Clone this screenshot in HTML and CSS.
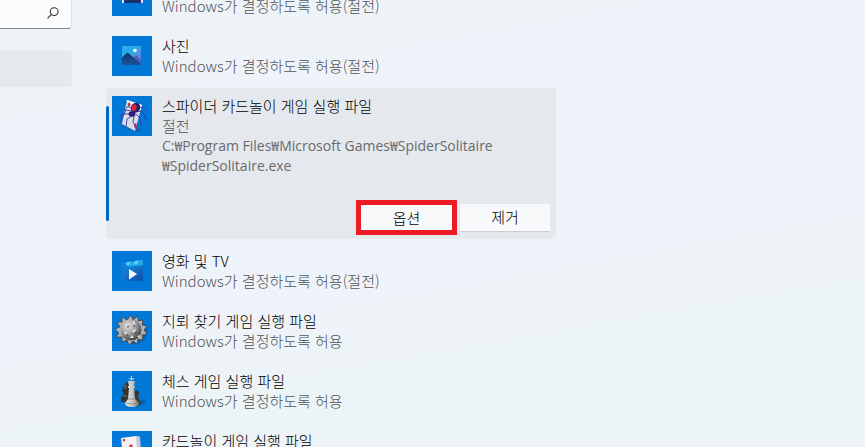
FILE: index.html
```html
<!DOCTYPE html>
<html lang="ko">

<head>
    <meta charset="UTF-8">
    <meta name="viewport" content="width=device-width, initial-scale=1.0">
    <title>그래픽</title>
    <link rel="stylesheet" href="styles.css">
</head>

<body>

    <aside class="sidebar">
        <div class="search">
            <input type="search" class="search-input" aria-label="설정 검색">
            <svg class="search-icon" viewBox="0 0 12 12" width="12" height="12" fill="none" stroke="#333" stroke-width="1.1">
                <circle cx="7.2" cy="4.6" r="3.9" />
                <path d="M4.4 7.4 .6 11.3" />
            </svg>
        </div>
        <a href="#" class="nav-item" aria-label="시스템"></a>
    </aside>

    <main class="content">
        <ul class="app-list">
            <li class="app">
                <svg class="app-icon" viewBox="0 0 40 40">
                    <rect width="40" height="40" fill="#0078d7" />
                    <rect x="10" y="10" width="21" height="17" rx="1" fill="#2b2f86" />
                    <path d="M10 24h2v3h-2zM29 24h2v3h-2z" fill="#e4e6f8" />
                    <path d="M12 27v-2l7-3 9 3v2z" fill="#17306d" />
                </svg>
                <div class="app-text">
                    <p class="app-name">비디오 편집기</p>
                    <p class="app-info">Windows가 결정하도록 허용(절전)</p>
                </div>
            </li>

            <li class="app">
                <svg class="app-icon" viewBox="0 0 40 40">
                    <defs>
                        <linearGradient id="sky" x1="0" y1="0" x2="1" y2="1">
                            <stop offset=".35" stop-color="#26aeea" />
                            <stop offset="1" stop-color="#7a70d4" />
                        </linearGradient>
                        <linearGradient id="hill" x1="0" y1="0" x2="0" y2="1">
                            <stop offset="0" stop-color="#153466" />
                            <stop offset="1" stop-color="#1b549c" />
                        </linearGradient>
                    </defs>
                    <rect width="40" height="40" fill="#0078d7" />
                    <rect x="10" y="10" width="19" height="19" rx="1" fill="url(#sky)" />
                    <path d="M21 22l2.500-2.200q.8-.5 1.500.2l4 4V28z" fill="#4661b8" />
                    <path d="M10 21.500l4.500-4.300q1-.8 2 0L29 28q0 1-1 1H11q-1 0-1-1z" fill="url(#hill)" />
                    <circle cx="23" cy="14.500" r="1.800" fill="#fff" />
                </svg>
                <div class="app-text">
                    <p class="app-name">사진</p>
                    <p class="app-info">Windows가 결정하도록 허용(절전)</p>
                </div>
            </li>

            <li class="app selected">
                <svg class="app-icon" viewBox="0 0 40 40">
                    <rect width="40" height="40" fill="#0078d7" />
                    <path d="M8 31l6-2 12 5 4-2-2 4z" fill="#1558a4" opacity=".7" />
                    <path d="M15 4l15 5-7 26-13-7z" fill="#dcdce6" />
                    <path d="M15 4l15 5-1 4-14-7z" fill="#fff" />
                    <path d="M15.500 8l2-2 1 3-1.500 2zM22 29l2-2 1 3-2 3z" fill="#d42b32" />
                    <g fill="none" stroke="#3f35a0" stroke-width=".9">
                        <path d="M20 15l-6-1-4 8-2 5" />
                        <path d="M19 18l-8 0-4 5" />
                        <path d="M20 20l-5 3-1 8" />
                        <path d="M22 20l-1 6 3 5 1 4" />
                        <path d="M24 18l4 4 1 7" />
                        <path d="M25 15l6 1 4 9" />
                        <path d="M25 12l6-1 4 4" />
                        <path d="M20 13l-4-3-4 5" />
                    </g>
                    <ellipse cx="20" cy="18" rx="3.500" ry="2.800" fill="#2a2182" />
                    <ellipse cx="23.500" cy="11.800" rx="4.500" ry="5.200" transform="rotate(30 23.500 11.800)" fill="#251e70" />
                    <ellipse cx="22" cy="11.800" rx="2.500" ry="3.500" transform="rotate(20 22 11.800)" fill="#d82431" />
                </svg>
                <div class="app-text">
                    <p class="app-name">스파이더 카드놀이 게임 실행 파일</p>
                    <p class="app-info">절전</p>
                    <p class="app-info app-path">C:₩Program Files₩Microsoft Games₩SpiderSolitaire<wbr>₩SpiderSolitaire.exe</p>
                </div>
                <div class="app-actions">
                    <button type="button" class="btn highlighted">옵션</button>
                    <button type="button" class="btn">제거</button>
                </div>
            </li>

            <li class="app">
                <svg class="app-icon" viewBox="0 0 40 40">
                    <defs>
                        <linearGradient id="film" x1="0" y1="0" x2="1" y2="1">
                            <stop offset="0" stop-color="#0a86dc" />
                            <stop offset=".4" stop-color="#1677cf" />
                            <stop offset="1" stop-color="#0c4da8" />
                        </linearGradient>
                    </defs>
                    <rect width="40" height="40" fill="#0078d7" />
                    <path d="M10 12l20-3q1 0 1 1v4l-20 3z" fill="#23a8e8" />
                    <path d="M15 11.200l4-.6-2 3.500-4 .6zM23 10l4-.6-2 3.500-4 .6z" fill="#59d0f7" />
                    <path d="M9 13q0-1 1-1h3l3 3.500h14q1 0 1 1V28q0 2-2 2H11q-2 0-2-2z" fill="url(#film)" />
                    <path d="M17 18l8 5-8 5.500z" fill="#f4f8fd" />
                </svg>
                <div class="app-text">
                    <p class="app-name">영화 및 TV</p>
                    <p class="app-info">Windows가 결정하도록 허용(절전)</p>
                </div>
            </li>

            <li class="app">
                <svg class="app-icon" viewBox="0 0 40 40">
                    <defs>
                        <radialGradient id="mine" cx=".35" cy=".3" r=".75">
                            <stop offset="0" stop-color="#e2e2e2" />
                            <stop offset=".5" stop-color="#a2a2a2" />
                            <stop offset="1" stop-color="#3c3c3c" />
                        </radialGradient>
                    </defs>
                    <rect width="40" height="40" fill="#0078d7" />
                    <ellipse cx="22" cy="21" rx="13" ry="12" fill="#07529d" opacity=".6" />
                    <path d="M19 4l2 5 5-4 0 5 5-1-1 5 5 1-3 4 3 4-5 1 1 5-5-1-1 5-4-3-4 4-2-5-5 2 0-5-6 0 3-4-4-4 5-2-3-5 5 0 0-5 5 3z" fill="#b3b3b3" stroke="#484848" stroke-width=".8" />
                    <circle cx="19" cy="19" r="10.500" fill="url(#mine)" />
                    <path d="M13 13l3 1-1 3zM20 12l3-2 0 4zM12 21l3 0-1 3zM20 20l4-2-1 4zM18 27l2-3 2 3zM25 25l3-1-1 3z" fill="#e3e3e3" />
                    <path d="M16 14l1 2-2 1zM23 14l-2 1 2 1zM15 23l1 1-2 2zM24 20l1 2-3 1zM21 27l-1 1-2-1z" fill="#404040" />
                </svg>
                <div class="app-text">
                    <p class="app-name">지뢰 찾기 게임 실행 파일</p>
                    <p class="app-info">Windows가 결정하도록 허용</p>
                </div>
            </li>

            <li class="app">
                <svg class="app-icon" viewBox="0 0 40 40">
                    <defs>
                        <linearGradient id="king" x1="0" y1="0" x2="1" y2="0">
                            <stop offset="0" stop-color="#e4e4df" />
                            <stop offset=".5" stop-color="#cbc9c3" />
                            <stop offset="1" stop-color="#77736e" />
                        </linearGradient>
                    </defs>
                    <rect width="40" height="40" fill="#0078d7" />
                    <path d="M20 33l13-5v4l-8 4z" fill="#085da8" />
                    <path d="M9 27l3-5-2-2 2-6 3-3 3 3-1 8 2 6-1 3H9z" fill="#333332" />
                    <path d="M12 15l2-1-1 4M11 25l4 0" fill="none" stroke="#777" />
                    <circle cx="24.500" cy="22" r="2.500" fill="#333" />
                    <path d="M23 24h3l1 4 2 4-3 3h-5z" fill="#3c3b39" />
                    <path d="M18.500 5h1.500v2h2v1.500h-2V10h3l-1 5h1v2h-1l1 11 4 4q0 4-7 4t-7-4l3-4 1-11h-1v-2h1l-1-5h3.500V8.500h-2V7h2z" fill="url(#king)" />
                    <path d="M15.500 28h8M14 32q6 2 13 0" fill="none" stroke="#85817b" stroke-width=".8" />
                </svg>
                <div class="app-text">
                    <p class="app-name">체스 게임 실행 파일</p>
                    <p class="app-info">Windows가 결정하도록 허용</p>
                </div>
            </li>

            <li class="app">
                <svg class="app-icon" viewBox="0 0 40 40">
                    <rect width="40" height="40" fill="#0078d7" />
                    <path d="M9 7l15-2 4 1 1 27-17 2z" fill="#f3f1f3" />
                    <path d="M24 5l4 1 1 27-3 1z" fill="#c9c9d1" />
                    <path d="M10.500 9l1.500-1.500L13.500 9 12 11zM17 15l2-2 2 2-2 3z" fill="#d8363c" />
                </svg>
                <div class="app-text">
                    <p class="app-name">카드놀이 게임 실행 파일</p>
                    <p class="app-info">Windows가 결정하도록 허용</p>
                </div>
            </li>
        </ul>
    </main>

</body>

</html>
```
FILE: styles.css
```css
* {
    box-sizing: border-box;
}

body {
    margin: 0;
    height: 100vh;
    display: flex;
    align-items: flex-start;
    gap: 34px;
    overflow: hidden;
    background: linear-gradient(170deg, #eef3f8 0%, #eef3fa 45%, #edf4f7 75%, #edf4f7 100%);
    font-family: "Noto Sans CJK KR", "Noto Sans", sans-serif;
    font-size: 15px;
    font-weight: 300;
    line-height: 20px;
    color: #000;
}

.sidebar {
    flex: none;
    width: 72px;
}

.search {
    display: flex;
    align-items: center;
    justify-content: flex-end;
    height: 33px;
    margin: -4px 0 22px;
    padding-right: 12px;
    background-color: #fbfcfe;
    border: 1px solid #dfe3e7;
    border-bottom-color: #83868a;
    border-left: none;
    border-radius: 0 4px 4px 0;
}

.search-input {
    flex: 1;
    width: 0;
    min-width: 0;
    border: none;
    outline: none;
    background: none;
    font: inherit;
}

.search-icon {
    flex: none;
}

.nav-item {
    display: block;
    height: 36px;
    background-color: #e5e9ed;
    border-radius: 0 4px 4px 0;
}

.content {
    flex: 1;
    min-width: 0;
}

/* list is scrolled part of the way down */
.app-list {
    display: flex;
    flex-direction: column;
    gap: 4px;
    max-width: 450px;
    margin: -32px 0 0;
    padding: 0;
    list-style: none;
}

.app {
    display: grid;
    grid-template-columns: 40px 1fr;
    column-gap: 10px;
    padding: 8px 6px;
    border-radius: 4px;
}

.app-icon {
    width: 40px;
    height: 40px;
}

.app-text {
    min-width: 0;
}

.app-name,
.app-info {
    margin: 0;
}

.app-info {
    color: #515457;
}

.app-path {
    font-family: "Open Sans", "Noto Sans CJK KR", sans-serif;
    font-size: 14px;
    font-weight: 400;
    color: #686b6e;
}

.selected {
    position: relative;
    padding-bottom: 4px;
    background-color: #e5e9ed;
}

.selected::before {
    content: "";
    position: absolute;
    left: 0;
    top: 18px;
    bottom: 18px;
    width: 3px;
    border-radius: 2px;
    background-color: #0067c0;
}

.app-actions {
    grid-column: 1 / -1;
    display: flex;
    justify-content: flex-end;
    align-items: center;
    gap: 3px;
    margin-top: 24px;
}

.btn {
    width: 90px;
    height: 28px;
    padding: 0;
    border: none;
    border-bottom: 1px solid #c9ccd0;
    border-radius: 1px;
    background-color: #f8f9fb;
    color: inherit;
    font: inherit;
}

.highlighted {
    width: 101px;
    height: 35px;
    border: 5px solid #ed1c24;
    border-radius: 0;
}
```
